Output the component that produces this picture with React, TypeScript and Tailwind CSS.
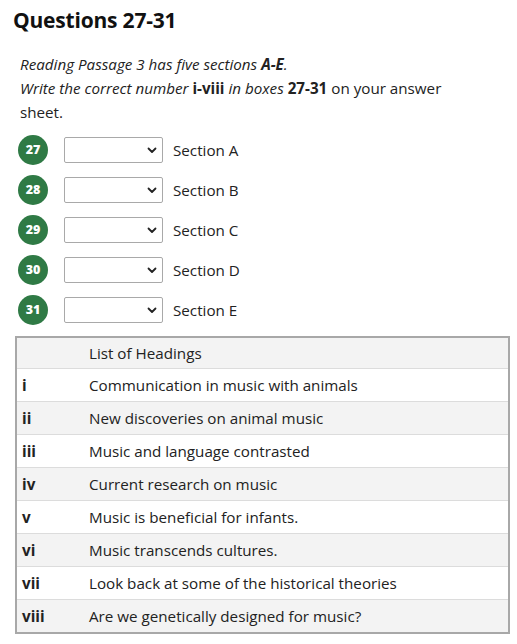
import React from "react";

const sections = ["A", "B", "C", "D", "E"];

const headings: [string, string][] = [
  ["i", "Communication in music with animals"],
  ["ii", "New discoveries on animal music"],
  ["iii", "Music and language contrasted"],
  ["iv", "Current research on music"],
  ["v", "Music is beneficial for infants."],
  ["vi", "Music transcends cultures."],
  ["vii", "Look back at some of the historical theories"],
  ["viii", "Are we genetically designed for music?"],
];

function Dropdown() {
  return (
    <div className="flex h-[26px] w-[99px] items-center justify-end rounded-[2px] border border-[#a9a9a9] bg-white pr-[5px]">
      <svg width="10" height="7" viewBox="0 0 10 7" fill="none">
        <path d="M1.5 1.5 L5 5 L8.5 1.5" stroke="#222" strokeWidth="1.8" strokeLinecap="round" strokeLinejoin="round" />
      </svg>
    </div>
  );
}

export default function App() {
  return (
    <div className="min-h-[644px] w-[517px] bg-white text-[#222] [font-family:'Open_Sans',sans-serif]">
      <h2 className="pl-[13px] pt-[6px] text-[21px] font-bold leading-[28px] tracking-[-0.2px] text-[#111]">
        Questions 27-31
      </h2>

      <div className="px-[20px] pt-[18px] text-[15.2px] leading-[24px]">
        <p className="italic">
          Reading Passage 3 has five sections <b>A-E</b>.
        </p>
        <p className="w-[452px]">
          <i>Write the correct number</i> <b>i-viii</b> <i>in boxes</i> <b>27-31</b> on your answer sheet.
        </p>
      </div>

      <div className="flex flex-col gap-[10px] pl-[18px] pt-[11px]">
        {sections.map((s, i) => (
          <div key={s} className="flex items-center">
            <div className="flex h-[30px] w-[30px] items-center justify-center rounded-full bg-[#2f7a45] text-[12.5px] font-extrabold text-white">
              {27 + i}
            </div>
            <div className="ml-[16px]">
              <Dropdown />
            </div>
            <span className="ml-[10px] text-[15.2px]">Section {s}</span>
          </div>
        ))}
      </div>

      <div className="ml-[15px] mt-[11px] w-[495px] border-2 border-[#a8a8a8] text-[15.2px]">
        <div className="flex h-[30px] items-center bg-[#f3f3f3]">
          <span className="pl-[72px]">List of Headings</span>
        </div>
        {headings.map(([n, t], i) => (
          <div
            key={n}
            className={`flex h-[33px] items-center border-t border-[#dcdcdc] ${i % 2 === 1 ? "bg-[#f3f3f3]" : "bg-white"}`}
          >
            <span className="w-[72px] pl-[5px] font-bold">{n}</span>
            <span>{t}</span>
          </div>
        ))}
      </div>
    </div>
  );
}
